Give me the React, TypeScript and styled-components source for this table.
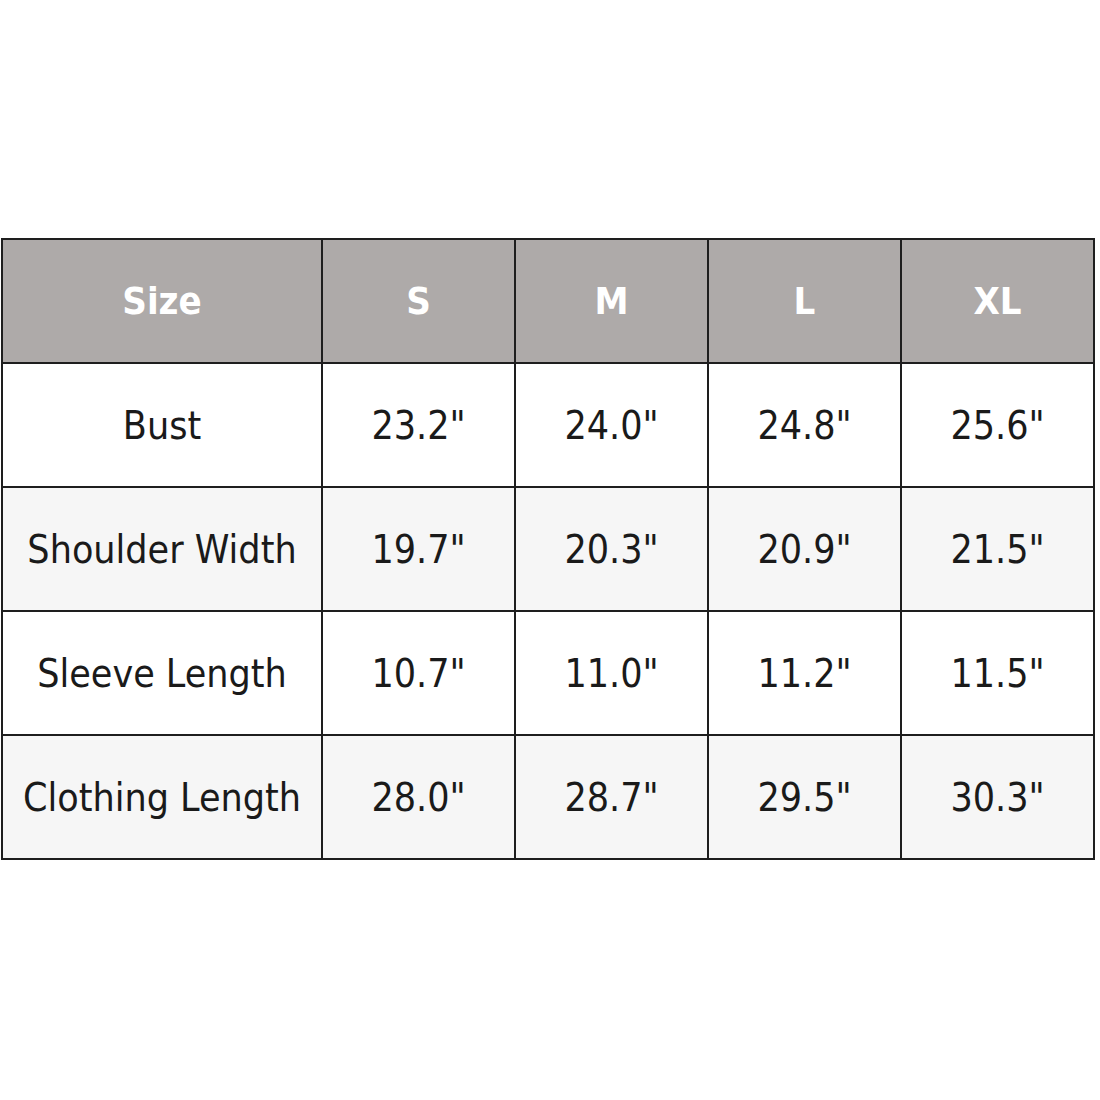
import React from "react";
import styled, { createGlobalStyle } from "styled-components";

const GlobalStyle = createGlobalStyle`
  html, body {
    margin: 0;
    padding: 0;
    background: #ffffff;
  }
`;

const sizes = ["S", "M", "L", "XL"];

const rows: { label: string; values: string[] }[] = [
  { label: "Bust", values: ['23.2"', '24.0"', '24.8"', '25.6"'] },
  { label: "Shoulder Width", values: ['19.7"', '20.3"', '20.9"', '21.5"'] },
  { label: "Sleeve Length", values: ['10.7"', '11.0"', '11.2"', '11.5"'] },
  { label: "Clothing Length", values: ['28.0"', '28.7"', '29.5"', '30.3"'] },
];

const App = () => {
  return (
    <Page>
      <GlobalStyle />
      <Chart>
        <colgroup>
          <LabelCol />
          {sizes.map((s) => (
            <SizeCol key={s} />
          ))}
        </colgroup>
        <thead>
          <tr>
            <HeadCell>Size</HeadCell>
            {sizes.map((s) => (
              <HeadCell key={s}>{s}</HeadCell>
            ))}
          </tr>
        </thead>
        <tbody>
          {rows.map((row, i) => (
            <BodyRow key={row.label} $shaded={i % 2 === 1}>
              <Cell>{row.label}</Cell>
              {row.values.map((v, j) => (
                <Cell key={j}>{v}</Cell>
              ))}
            </BodyRow>
          ))}
        </tbody>
      </Chart>
    </Page>
  );
};

export default App;

const Page = styled.div`
  width: 1100px;
  height: 1100px;
  box-sizing: border-box;
  padding: 238px 6px 0 1px;
`;

const Chart = styled.table`
  border-collapse: collapse;
  table-layout: fixed;
  width: 1093px;
  font-family: "DejaVu Sans Condensed", "DejaVu Sans", sans-serif;
`;

const LabelCol = styled.col`
  width: 320px;
`;

const SizeCol = styled.col`
  width: 193px;
`;

const HeadCell = styled.th`
  height: 122px;
  padding: 0;
  border: 2px solid #1e1e1e;
  background: #aeaaa9;
  color: #ffffff;
  font-size: 38px;
  font-weight: bold;
  text-align: center;
  vertical-align: middle;
`;

const BodyRow = styled.tr<{ $shaded: boolean }>`
  background: ${(p) => (p.$shaded ? "#f6f6f6" : "#ffffff")};
`;

const Cell = styled.td`
  height: 122px;
  padding: 0;
  border: 2px solid #1e1e1e;
  color: #1a1a1a;
  font-size: 39px;
  text-align: center;
  vertical-align: middle;
`;
